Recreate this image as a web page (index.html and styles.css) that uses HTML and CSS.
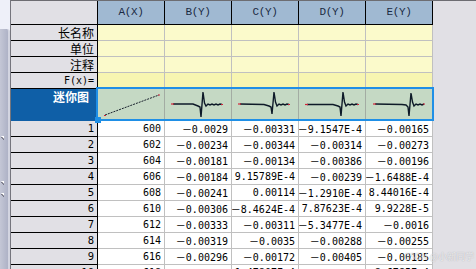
FILE: index.html
```html
<!DOCTYPE html>
<html lang="zh">
<head>
<meta charset="utf-8">
<title>Worksheet</title>
<link rel="stylesheet" href="styles.css">
</head>
<body>
<div class="window">
  <div class="side">
    <div class="side-panel">
      <span class="mark m1"></span>
      <span class="mark m2"></span>
      <span class="mark m3"></span>
    </div>
  </div>
  <div class="sheet">
    <div class="grid">
      <div class="c corner"></div>
      <div class="c hdr">A(X)</div>
      <div class="c hdr">B(Y)</div>
      <div class="c hdr">C(Y)</div>
      <div class="c hdr">D(Y)</div>
      <div class="c hdr">E(Y)</div>

      <div class="c rh lbl">长名称</div>
      <div class="c meta"></div><div class="c meta"></div><div class="c meta"></div><div class="c meta"></div><div class="c meta"></div>
      <div class="c rh lbl">单位</div>
      <div class="c meta"></div><div class="c meta"></div><div class="c meta"></div><div class="c meta"></div><div class="c meta"></div>
      <div class="c rh lbl">注释</div>
      <div class="c meta"></div><div class="c meta"></div><div class="c meta"></div><div class="c meta"></div><div class="c meta"></div>
      <div class="c rh lbl mono">F(x)=</div>
      <div class="c meta fx"></div><div class="c meta fx"></div><div class="c meta fx"></div><div class="c meta fx"></div><div class="c meta fx"></div>

      <div class="c rh spark-lbl">迷你图</div>
      <div class="c spark">
        <svg viewBox="0 0 66 31" width="66" height="31">
          <path class="dot" d="M7,26 L61,6"/>
          <path class="red" d="M6,26.5 h2"/>
          <path class="red" d="M60,6 h2"/>
        </svg>
      </div>
      <div class="c spark">
        <svg viewBox="0 0 66 31" width="66" height="31">
          <path class="wave" d="M8,15 L28,15 L33,17 L35,18 L36,28 L38,3 L39.5,14 L41,17 L43,15 L45,16 L47,15 L49,16 L51,15 L53,16 L55,15 L57,15.5"/>
          <path class="red" d="M6,15 h3"/>
          <path class="red" d="M56,15.5 h2"/>
        </svg>
      </div>
      <div class="c spark">
        <svg viewBox="0 0 66 31" width="66" height="31">
          <path class="wave" d="M8,15 L32,15.5 L37,17 L39,18 L40,25 L42,3 L43.5,13 L45,17 L47,15 L49,16 L51,15 L53,16 L55,15 L57,15.5"/>
          <path class="red" d="M6,15 h3"/>
          <path class="red" d="M56,15.5 h2"/>
        </svg>
      </div>
      <div class="c spark">
        <svg viewBox="0 0 66 31" width="66" height="31">
          <path class="wave" d="M8,15.5 L34,15.5 L39,17 L41,18 L42,27 L44,3 L45.5,13 L47,17 L49,15 L51,16 L53,15 L55,16 L57,15 L59,15.5"/>
          <path class="red" d="M6,15.5 h3"/>
          <path class="red" d="M58,15.5 h2"/>
        </svg>
      </div>
      <div class="c spark">
        <svg viewBox="0 0 66 31" width="66" height="31">
          <path class="wave" d="M9,15 L36,15.5 L40,16 L42,18 L43,27 L45,4 L46.5,13 L48,17 L50,15 L52,16 L54,15 L56,16 L58,15"/>
          <path class="red" d="M7,15 h3"/>
          <path class="red" d="M57,15 h2"/>
        </svg>
      </div>

      <div class="c rh num">1</div><div class="c d">600</div><div class="c d">－0.0029</div><div class="c d">－0.00331</div><div class="c d">－9.1547E-4</div><div class="c d">－0.00165</div>
      <div class="c rh num">2</div><div class="c d">602</div><div class="c d">－0.00234</div><div class="c d">－0.00344</div><div class="c d">－0.00314</div><div class="c d">－0.00273</div>
      <div class="c rh num">3</div><div class="c d">604</div><div class="c d">－0.00181</div><div class="c d">－0.00134</div><div class="c d">－0.00386</div><div class="c d">－0.00196</div>
      <div class="c rh num">4</div><div class="c d">606</div><div class="c d">－0.00184</div><div class="c d">9.15789E-4</div><div class="c d">－0.00239</div><div class="c d">－1.6488E-4</div>
      <div class="c rh num">5</div><div class="c d">608</div><div class="c d">－0.00241</div><div class="c d">0.00114</div><div class="c d">－1.2910E-4</div><div class="c d">8.44016E-4</div>
      <div class="c rh num">6</div><div class="c d">610</div><div class="c d">－0.00306</div><div class="c d">－8.4624E-4</div><div class="c d">7.87623E-4</div><div class="c d">9.9228E-5</div>
      <div class="c rh num">7</div><div class="c d">612</div><div class="c d">－0.00333</div><div class="c d">－0.00311</div><div class="c d">－5.3477E-4</div><div class="c d">－0.0016</div>
      <div class="c rh num">8</div><div class="c d">614</div><div class="c d">－0.00319</div><div class="c d">－0.0035</div><div class="c d">－0.00288</div><div class="c d">－0.00255</div>
      <div class="c rh num">9</div><div class="c d">616</div><div class="c d">－0.00296</div><div class="c d">－0.00172</div><div class="c d">－0.00405</div><div class="c d">－0.00185</div>
      <div class="c rh num">10</div><div class="c d">618</div><div class="c d">－0.00288</div><div class="c d">1.47807E-4</div><div class="c d">－0.00097</div><div class="c d">8.6785E-4</div>
    </div>
    <div class="selection"></div>
    <div class="handle"></div>
  </div>
  <div class="watermark">CSDN @小新同学</div>
</div>
</body>
</html>
```
FILE: styles.css
```css
html, body {
  margin: 0;
  padding: 0;
  background: #e1e0e5;
}

.window {
  position: relative;
  display: flex;
  width: 476px;
  height: 269px;
  overflow: hidden;
  background: #e1e0e5;
}

.side {
  width: 10px;
  flex: none;
  background: #eef0f9;
  border-right: 1px solid #75757d;
  display: flex;
  flex-direction: column;
}

.side-panel {
  position: relative;
  margin-top: 29px;
  flex: 1;
  width: 8px;
  background: linear-gradient(to right, #c4c7d6, #aeb2c6);
  border-right: 2px solid #d3d5e1;
  border-top-right-radius: 3px;
}

.mark {
  position: absolute;
  left: 1px;
  width: 0;
  height: 0;
  border-left: 3px solid transparent;
  border-top: 3px solid #ffffff;
  filter: drop-shadow(0 1px 0 #303040);
}
.m1 { top: 107px; }
.m2 { top: 152px; }
.m3 { top: 164px; }

.sheet {
  position: relative;
  flex: 1;
  border-top: 1px solid #6d6d72;
}

.grid {
  display: grid;
  grid-template-columns: 87px repeat(5, 67px);
  grid-template-rows: 24px repeat(4, 16px) 32px repeat(10, 16px);
  width: max-content;
}

.c {
  box-sizing: border-box;
  border-right: 1px solid #c0c0c0;
  border-bottom: 1px solid #c0c0c0;
  overflow: hidden;
  white-space: nowrap;
  display: flex;
  align-items: center;
  justify-content: flex-end;
}

.corner {
  background: #e1e0e5;
  border-right-color: #000;
  border-bottom-color: #000;
}

.hdr {
  background: #a0b9d2;
  border-right-color: #000;
  border-bottom-color: #000;
  justify-content: center;
  font-family: "Liberation Mono", monospace;
  font-size: 11px;
  letter-spacing: -0.3px;
  color: #1a2a42;
  padding-bottom: 2px;
}

.rh {
  background: #e1e0e5;
  border-right-color: #000;
  border-bottom-color: #000;
  padding-right: 3px;
  color: #000;
}

.lbl {
  font-family: "Noto Sans CJK SC", sans-serif;
  font-size: 12px;
  line-height: 15px;
}

.lbl.mono {
  font-family: "DejaVu Sans Mono", monospace;
  font-size: 10px;
}

.num {
  font-family: "DejaVu Sans Mono", "Noto Sans CJK SC", monospace;
  font-size: 10.5px;
  padding-bottom: 1px;
}

.meta {
  background: #fbfacb;
}

.meta.fx {
  background: #f7f5b1;
}

.spark-lbl {
  background: #0f5fa7;
  border-bottom-color: #0f5fa7;
  align-items: flex-start;
  padding-top: 1px;
  padding-right: 8px;
  color: #fff;
  font-family: "Noto Sans CJK SC", sans-serif;
  font-weight: 700;
  font-size: 12px;
  line-height: 14px;
}

.spark {
  background: #c5d9c4;
  border-right-color: #a3aca3;
  justify-content: flex-start;
  align-items: flex-start;
}

.spark svg {
  display: block;
}

.dot {
  fill: none;
  stroke: #18202c;
  stroke-width: 1;
  stroke-dasharray: 2 1;
}

.wave {
  fill: none;
  stroke: #0e1a28;
  stroke-width: 1.4;
  stroke-linejoin: miter;
}

.red {
  fill: none;
  stroke: #d0243a;
  stroke-width: 1.2;
}

.d {
  background: #ffffff;
  padding-right: 3px;
  padding-bottom: 1px;
  font-family: "DejaVu Sans Mono", "Noto Sans CJK SC", monospace;
  font-size: 10px;
  color: #000;
}

.selection {
  position: absolute;
  left: 85px;
  top: 86px;
  width: 338px;
  height: 34px;
  box-sizing: border-box;
  border: 2px solid #1f8fe6;
  pointer-events: none;
}

.handle {
  position: absolute;
  left: 84px;
  top: 116px;
  width: 6px;
  height: 6px;
  background: #1f8fe6;
}

.watermark {
  position: absolute;
  left: 404px;
  top: 251px;
  font-family: "Noto Sans CJK SC", sans-serif;
  font-size: 9px;
  line-height: 12px;
  color: rgba(255, 255, 255, 0.75);
  text-shadow: 0 0 1px rgba(90, 90, 100, 0.5);
  white-space: nowrap;
}
```
